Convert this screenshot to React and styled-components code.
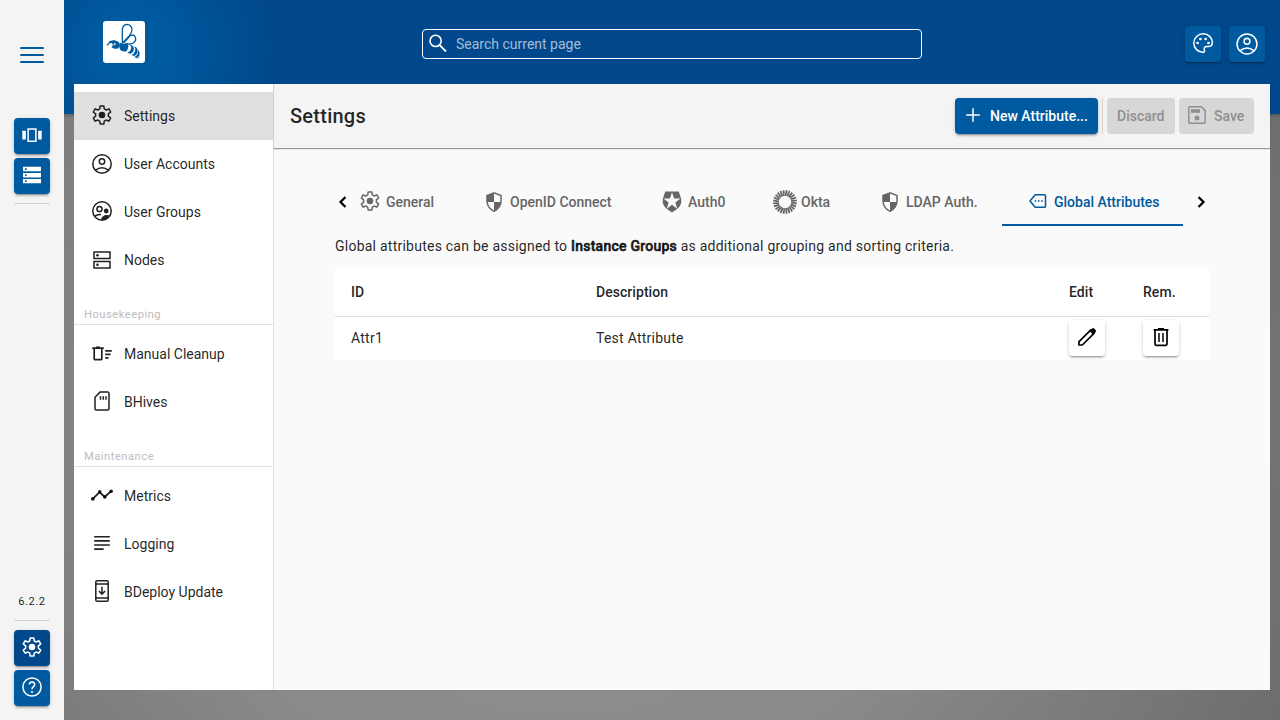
import React from 'react';
import styled, { createGlobalStyle } from 'styled-components';

const Global = createGlobalStyle`
  * { box-sizing: border-box; }
  body { margin: 0; font-family: Roboto, "Liberation Sans", sans-serif; font-size: 14px; color: rgba(0,0,0,.87); overflow: hidden; }
`;

const blue = '#005a9f';
const blueDark = '#00488b';
const raised = '0 3px 1px -2px rgba(0,0,0,.2), 0 2px 2px 0 rgba(0,0,0,.14), 0 1px 5px 0 rgba(0,0,0,.12)';

const Svg = styled.svg`
  display: block;
  flex: none;
  width: ${(p) => p.$size || 24}px;
  height: ${(p) => p.$size || 24}px;
  margin-top: ${(p) => (p.$raise ? -2 : 0)}px;
  fill: none;
  stroke: currentColor;
  stroke-width: ${(p) => p.$weight || 1.5};
`;

const solid = { fill: 'currentColor', stroke: 'none' };

const shapes = {
  settings: (
    <>
      <path strokeLinejoin="round" d="M10.13 3h3.74l.38 2.9q1 .4 1.85 1.1l2.8-1.15L20.7 9l-2.35 1.9q.15 1.1 0 2.2L20.7 15l-1.8 3.15L16.1 17q-.85.7-1.85 1.1l-.38 2.9h-3.74l-.38-2.9q-1-.4-1.85-1.1l-2.8 1.15L3.3 15l2.35-1.9q-.15-1.1 0-2.2L3.3 9l1.8-3.15L7.9 7q.85-.7 1.85-1.1z" />
      <circle cx="12" cy="12" r="3.3" {...solid} />
    </>
  ),
  account: (
    <>
      <circle cx="12" cy="12" r="9.2" />
      <circle cx="12" cy="9.5" r="2.7" />
      <path d="M5.6 18.2Q12 13.2 18.4 18.2" />
    </>
  ),
  groups: (
    <>
      <circle cx="12" cy="12" r="9.2" />
      <circle cx="9.5" cy="10" r="2.6" />
      <circle cx="16.2" cy="12" r="2.4" {...solid} />
      <path d="M5 17.2q2.6-2 6-1.6" />
      <path d="M11 20.8q.6-3.9 4.6-4.8 2.6-.3 3.6.6-2.6 4.6-8.2 4.2z" {...solid} />
    </>
  ),
  nodes: (
    <>
      <path d="M4 4h16v6.4H4zM4 13.6h16V20H4z" />
      <circle cx="7.5" cy="7.3" r="1.3" {...solid} />
      <circle cx="7.5" cy="16.8" r="1.3" {...solid} />
    </>
  ),
  cleanup: (
    <>
      <path strokeWidth="1.7" d="M4.2 6.5v10.2q0 1 1 1h5.6q1 0 1-1V6.5M2.2 6.2h11.6M6 5.3h4" />
      <path strokeWidth="1.7" d="M15.2 8.8h6.6M15.2 12.3h5.4M15.2 15.8h3.3" />
    </>
  ),
  sdcard: (
    <>
      <path strokeLinejoin="round" d="M10.2 2.9h7.4q1.4 0 1.4 1.4v15.4q0 1.4-1.4 1.4H6.4Q5 21.1 5 19.7V8.2z" />
      <path d="M10.5 7.2v3.6M13.3 7.2v3.6M16 7.2v3.6" />
    </>
  ),
  metrics: (
    <>
      <path strokeWidth="1.8" d="M2.8 15.8 9.6 9l5 5L21.3 8" />
      <circle cx="2.8" cy="15.8" r="1.9" {...solid} />
      <circle cx="9.7" cy="8.7" r="1.7" {...solid} />
      <circle cx="14.8" cy="14" r="1.8" {...solid} />
      <circle cx="21.2" cy="8.3" r="1.8" {...solid} />
    </>
  ),
  logging: <path strokeWidth="1.6" d="M4.2 5.8h15.6M4.2 9.9h15.6M4.2 14h15.6M4.2 18.1h9.4" />,
  update: (
    <>
      <rect x="5.8" y="1.8" width="12.4" height="20.4" rx="1.3" />
      <path d="M5.8 5h12.4M5.8 19h12.4M12 7.8v7.2M8.9 12l3.1 3.1 3.1-3.1" />
    </>
  ),
  carousel: (
    <>
      <path d="M2.3 7.8h3.5v8.8H2.3zM18.2 7.8h3.5v8.8h-3.5z" {...solid} />
      <path d="M8.1 6h7.8v12.2H8.1z" />
    </>
  ),
  storage: (
    <>
      <path d="M3 3.8h18v4.5H3zM3 9.9h18v4.5H3zM3 16h18v4.2H3z" {...solid} />
      <path stroke={blue} strokeWidth="1.6" d="M5 6.1h1.7M5 12.2h1.7M5 18.1h1.7" />
    </>
  ),
  help: (
    <>
      <circle cx="12" cy="12" r="9.1" />
      <path d="M9.3 9.5Q9.6 7 12.1 7q2.6.2 2.6 2.5 0 1.2-1.5 2.3-1.2 1-1.2 2.4" />
      <circle cx="12" cy="17" r="1.05" {...solid} />
    </>
  ),
  search: (
    <>
      <circle cx="9.6" cy="8.9" r="5.600" />
      <path d="m13.700 13.100 6.300 6.400" strokeWidth="1.800" />
    </>
  ),
  palette: (
    <>
      <path d="M12.300 2.800c-5.100 0-9.500 4-9.500 9.200s4.200 9.300 9 9.300c1.300 0 1.900-.9 1.600-2.100-.7-2 .2-3.700 2.300-3.700h2.200c2 0 3.400-1.500 3.400-3.900 0-4.900-4-8.800-9-8.800z" />
      {[[6.6, 12], [9.4, 8], [14.6, 8], [17.5, 12]].map(([x, y]) => <circle key={x} cx={x} cy={y} r="1.35" {...solid} />)}
    </>
  ),
  plus: <path d="M12 5.200v13.600M5.200 12h13.600" />,
  save: (
    <>
      <path strokeLinejoin="round" d="M5 3.800h11.400L20.200 7.600V19q0 1.200-1.200 1.200H5Q3.800 20.200 3.800 19V5Q3.800 3.800 5 3.800z" />
      <path d="M6 6.200h9v3.600H6z" {...solid} />
      <circle cx="12" cy="15" r="2.500" {...solid} />
    </>
  ),
  shield: (
    <>
      <path d="M12 2.900 5 5.500v5.600q0 6.700 7 10.200 7-3.500 7-10.200V5.500z" />
      <path d="M12 3 5 5.600V12h7zM12 12v9.200q6-3.100 7-9.200z" {...solid} />
    </>
  ),
  auth0: (
    <>
      <path d="M5.200 1.500h13.600l2.300 7.300q1.200 6-3.700 9.900L12 22.500l-5.400-3.800q-4.900-3.900-3.700-9.900z" {...solid} />
      <path fill="#fafafa" stroke="none" d="m12 2.300 2 6.200h6.500l-5.200 3.900 2 6.300-5.300-3.900-5.300 3.900 2-6.300-5.200-3.900H10z" />
    </>
  ),
  okta: (
    <g strokeWidth="1.800">
      {Array.from({ length: 24 }, (_, i) => <path key={i} d="M12.600 0.100 11.800 5.800" transform={`rotate(${i * 15 + 5} 12 12)`} />)}
    </g>
  ),
  label: (
    <>
      <path strokeLinejoin="round" d="M9.200 5.800h9.300q1 0 1 1v10.400q0 1-1 1H9.200L4 12z" />
      <path strokeWidth="1.700" d="M8.600 12h1.600M11.900 12h1.600M15.200 12h1.600" />
    </>
  ),
  edit: (
    <>
      <path strokeLinejoin="round" strokeWidth="1.700" d="M4 20v-3.300L15.900 4.800l3.300 3.300L7.300 20z" />
      <path d="m14.500 6 2.700-2.500q.9-.8 1.800 0l1.700 1.700q.9.900 0 1.800L18 9.500z" {...solid} />
    </>
  ),
  trash: (
    <g strokeWidth="1.700">
      <path d="M6 5.200v13.900q0 1.200 1.200 1.200h9.600q1.200 0 1.200-1.200V5.200M4.600 4.800h14.800M9 3.900h6" />
      <path d="M10 8v9M14 8v9" strokeWidth="1.500" />
    </g>
  ),
};

const Icon = ({ name, size, weight, raise }) => (
  <Svg viewBox="0 0 24 24" $size={size} $weight={weight} $raise={raise}>{shapes[name]}</Svg>
);

const Page = styled.div`
  display: grid;
  grid-template-columns: 64px 1fr;
  width: 1280px;
  height: 720px;
`;

const Rail = styled.aside`
  display: flex;
  flex-direction: column;
  align-items: center;
  background: #f4f4f4;
  padding-bottom: 14px;
`;

const MenuButton = styled.div`
  display: flex;
  flex-direction: column;
  gap: 5px;
  padding: 47px 0 57px;
`;

const MenuBar = styled.span`
  width: 24px;
  height: 2px;
  border-radius: 1px;
  background: ${blue};
  &:last-child { margin-bottom: -2px; }
`;

const RailGroup = styled.div`
  display: flex;
  flex-direction: column;
  gap: 4px;
`;

const IconButton = styled.button`
  display: grid;
  place-items: center;
  width: 36px;
  height: 36px;
  padding: 0 0 ${(p) => p.$lift || 0}px;
  border: 0;
  border-radius: 4px;
  color: ${(p) => (p.$plain ? '#000' : '#fff')};
  background: ${(p) => (p.$plain ? '#fff' : p.$active ? blueDark : blue)};
  box-shadow: ${raised};
`;

const RailLine = styled.div`
  width: 36px;
  height: 1px;
  background: #d3d3d3;
  margin: ${(p) => p.$margin};
`;

const Version = styled.div`
  margin-top: auto;
  font-size: 11.2px;
  line-height: 16px;
  letter-spacing: .5px;
`;

const Stage = styled.main`
  min-width: 0;
  padding-right: 10px;
  padding-left: 10px;
  background:
    radial-gradient(circle at 68px 50px, ${blue} 0, ${blue} 35px, ${blueDark} 142px) 0 0 / 100% 114px no-repeat,
    linear-gradient(rgba(0,0,0,.2), transparent) 0 114px / 100% 4px no-repeat,
    radial-gradient(ellipse 800px 800px at 500px 400px, #929292 0, #8a8a8a 50%, #6c6c6c 100%);
`;

const Header = styled.header`
  display: flex;
  align-items: center;
  height: 84px;
  padding-left: 29px;
  margin-right: 5px;
`;

const Logo = styled.div`
  width: 42px;
  height: 42px;
  border-radius: 3px;
  background: #fff;
  color: ${blue};
`;

const Search = styled.div`
  display: flex;
  align-items: center;
  gap: 6px;
  width: 500px;
  height: 30px;
  margin: 4px auto 0 277px;
  padding: 0 0 0 3px;
  border: 1px solid #fff;
  border-radius: 4px;
  color: #fff;
`;

const Placeholder = styled.span`
  color: rgba(255,255,255,.65);
`;

const HeaderActions = styled.div`
  display: flex;
  gap: 8px;
  margin-top: 4px;
`;

const Card = styled.section`
  display: grid;
  grid-template-columns: 200px 1fr;
  height: 606px;
  background: #fafafa;
`;

const Nav = styled.nav`
  padding-top: 8px;
  background: #fff;
  border-right: 1px solid #e0e0e0;
`;

const NavItem = styled.div`
  display: flex;
  align-items: center;
  gap: 10px;
  height: 48px;
  padding-left: 16px;
  background: ${(p) => (p.$active ? '#e0e0e0' : 'transparent')};
`;

const NavHeading = styled.div`
  height: 41px;
  margin-bottom: 5px;
  padding: 23px 10px 0;
  border-bottom: 1px solid #e0e0e0;
  color: #bdbdbd;
  font-size: 11.2px;
  line-height: 16px;
  letter-spacing: .5px;
`;

const Content = styled.div`
  min-width: 0;
`;

const Toolbar = styled.div`
  display: flex;
  align-items: center;
  height: 64px;
  padding: 0 16px;
  background: #f4f4f4;
  box-shadow: 0 1px 1px rgba(0,0,0,.4);
`;

const Title = styled.h1`
  margin: 0 auto 0 0;
  font-size: 20px;
  font-weight: 500;
  letter-spacing: .25px;
`;

const Button = styled.button`
  display: flex;
  align-items: center;
  gap: 5px;
  width: ${(p) => p.$width}px;
  height: 36px;
  padding: 0 0 0 ${(p) => p.$pad}px;
  border: 0;
  border-radius: 4px;
  font: 500 14px Roboto, sans-serif;
  white-space: nowrap;
  color: ${(p) => (p.$disabled ? '#8f8f8f' : '#fff')};
  background: ${(p) => (p.$disabled ? '#d7d7d7' : blue)};
  box-shadow: ${(p) => (p.$disabled ? 'none' : raised)};
  & + & { margin-left: 4px; }
`;

const Divider = styled.div`
  width: 1px;
  height: 36px;
  margin: 0 4px;
  background: #d3d3d3;
`;

const Body = styled.div`
  padding: 30px 61px 0;
`;

const TabBar = styled.div`
  display: grid;
  grid-template-columns: 16px 1fr 16px;
  align-items: center;
  height: 48px;
`;

const TabArrow = styled.svg`
  width: 16px;
  height: 16px;
  fill: none;
  stroke: #000;
  stroke-width: 2.2;
`;

const TabView = styled.div`
  overflow: hidden;
`;

const TabList = styled.div`
  display: flex;
  width: max-content;
  margin-left: -17px;
`;

const Tab = styled.div`
  display: flex;
  align-items: center;
  gap: 4px;
  width: ${(p) => p.$width}px;
  height: 48px;
  padding: ${(p) => (p.$active ? 2 : 0)}px 0 0 24px;
  white-space: nowrap;
  font-weight: 500;
  border-bottom: ${(p) => (p.$active ? `2px solid ${blue}` : 'none')};
  color: ${(p) => (p.$active ? blue : '#666')};
`;

const Hint = styled.p`
  margin: 10px 0 12px;
  line-height: 20px;
  letter-spacing: .24px;
  white-space: nowrap;
`;

const Strong = styled.b`
  font-weight: 500;
  -webkit-text-stroke: .6px currentColor;
`;

const Table = styled.div`
  background: #fff;
`;

const Row = styled.div`
  display: grid;
  grid-template-columns: 245px 473px 74px 50px;
  align-items: center;
  height: ${(p) => (p.$head ? 49 : 43)}px;
  padding: 0 0 ${(p) => (p.$head ? 0 : 2)}px 16px;
  font-weight: ${(p) => (p.$head ? 500 : 400)};
  letter-spacing: ${(p) => (p.$head ? 0.05 : 0.25)}px;
  border-bottom: ${(p) => (p.$head ? '1px solid #e0e0e0' : 'none')};
`;

const raisedNav = ['settings', 'groups', 'sdcard', 'metrics', 'logging', 'update'];

const navGroups = [
  { items: [['settings', 'Settings'], ['account', 'User Accounts'], ['groups', 'User Groups'], ['nodes', 'Nodes']] },
  { heading: 'Housekeeping', items: [['cleanup', 'Manual Cleanup'], ['sdcard', 'BHives']] },
  { heading: 'Maintenance', items: [['metrics', 'Metrics'], ['logging', 'Logging'], ['update', 'BDeploy Update']] },
];

const tabs = [
  ['settings', 'General', 124],
  ['shield', 'OpenID Connect', 178],
  ['auth0', 'Auth0', 113],
  ['okta', 'Okta', 105],
  ['shield', 'LDAP Auth.', 148],
  ['label', 'Global Attributes', 181],
];

const Bee = () => (
  <svg width="42" height="42" viewBox="0 0 42 42" fill="none" stroke="currentColor" strokeWidth="1.3">
    <path d="M19.3 22.3V8.5q.5-4.700 4.500-5.200 4.500.2 5.200 4.800.2 3-2.600 6.500L19.600 22" />
    <path d="m20.500 22 6.800-7.500q3.200-1.500 4.800 1.200 1.600 3.800-1.600 6.300-3.500 1.700-8.500 1" />
    <path d="M4.300 24.500q1.300-3.200 5-3.300M6 21.300q2.500-2.100 6.300-1.300" />
    <path fill="currentColor" stroke="none" d="M8.500 20.800q4.500-2.500 7.500.4 1.900 3.300-.8 6-3.500 1.600-6.900-1.300 1.600-.3 1.500-1.800-.2-1.700-1.800-2.500z" />
    <circle cx="11.600" cy="23.300" r="1" fill="#fff" stroke="none" />
    <path fill="currentColor" stroke="none" d="M17.300 21.700q4.100 2.200 7.500.1 1.600 4.800-1.300 8.400-4.500 1-6.600-2-1.600-4 .4-6.500zM26.200 23.600q2.700 1.700 1.800 4.600-.8 2.600-3.600 3.600l2.900 1q3.700-1.800 3.600-5.400-.6-3.300-4.700-3.800zM31.200 25.300q1.700 2.200.7 5.100-1 2.500-3.500 3.700l2.700 1q3.700-2.200 3.500-5.700-.3-3-3.400-4.100zM34.700 28.700q1 2.600-.5 5-1 1.600-2.800 2.200l2.200 1.400q3.100-1.900 3.100-4.800 0-2.300-2-3.800zM36.700 33.500q-.3 2.500-2.700 4.600 2.700-.7 2.700-4.600z" />
  </svg>
);

export default function App() {
  return (
    <Page>
      <Global />
      <Rail>
        <MenuButton><MenuBar /><MenuBar /><MenuBar /></MenuButton>
        <RailGroup>
          <IconButton $lift={2}><Icon name="carousel" /></IconButton>
          <IconButton $lift={2}><Icon name="storage" /></IconButton>
        </RailGroup>
        <RailLine $margin="9px 0 0" />
        <Version>6.2.2</Version>
        <RailLine $margin="10px 0 9px" />
        <RailGroup>
          <IconButton $active $lift={2}><Icon name="settings" weight={1.6} /></IconButton>
          <IconButton $lift={2}><Icon name="help" /></IconButton>
        </RailGroup>
      </Rail>
      <Stage>
        <Header>
          <Logo><Bee /></Logo>
          <Search>
            <Icon name="search" weight={1.6} />
            <Placeholder>Search current page</Placeholder>
          </Search>
          <HeaderActions>
            <IconButton $lift={2}><Icon name="palette" /></IconButton>
            <IconButton><Icon name="account" size={26} weight={1.4} /></IconButton>
          </HeaderActions>
        </Header>
        <Card>
          <Nav>
            {navGroups.map((group, g) => (
              <React.Fragment key={g}>
                {group.heading && <NavHeading>{group.heading}</NavHeading>}
                {group.items.map(([icon, text]) => (
                  <NavItem key={text} $active={text === 'Settings'}>
                    <Icon name={icon} raise={raisedNav.includes(icon)} />
                    {text}
                  </NavItem>
                ))}
              </React.Fragment>
            ))}
          </Nav>
          <Content>
            <Toolbar>
              <Title>Settings</Title>
              <Button $width={143} $pad={6}><Icon name="plus" raise />New Attribute...</Button>
              <Divider />
              <Button $disabled $width={68} $pad={10}>Discard</Button>
              <Button $disabled $width={75} $pad={6}><Icon name="save" raise />Save</Button>
            </Toolbar>
            <Body>
              <TabBar>
                <TabArrow viewBox="0 0 16 16"><path d="M10.500 3 5.500 8l5 5" /></TabArrow>
                <TabView>
                  <TabList>
                    {tabs.map(([icon, text, width]) => (
                      <Tab key={text} $width={width} $active={icon === 'label'}>
                        <Icon name={icon} raise={icon === 'settings' || icon === 'label'} />
                        {text}
                      </Tab>
                    ))}
                  </TabList>
                </TabView>
                <TabArrow viewBox="0 0 16 16"><path d="m5.500 3 5 5-5 5" /></TabArrow>
              </TabBar>
              <Hint>Global attributes can be assigned to <Strong>Instance Groups</Strong> as additional grouping and sorting criteria.</Hint>
              <Table>
                <Row $head><span>ID</span><span>Description</span><span>Edit</span><span>Rem.</span></Row>
                <Row>
                  <span>Attr1</span>
                  <span>Test Attribute</span>
                  <IconButton $plain $lift={2}><Icon name="edit" /></IconButton>
                  <IconButton $plain $lift={2}><Icon name="trash" /></IconButton>
                </Row>
              </Table>
            </Body>
          </Content>
        </Card>
      </Stage>
    </Page>
  );
}
